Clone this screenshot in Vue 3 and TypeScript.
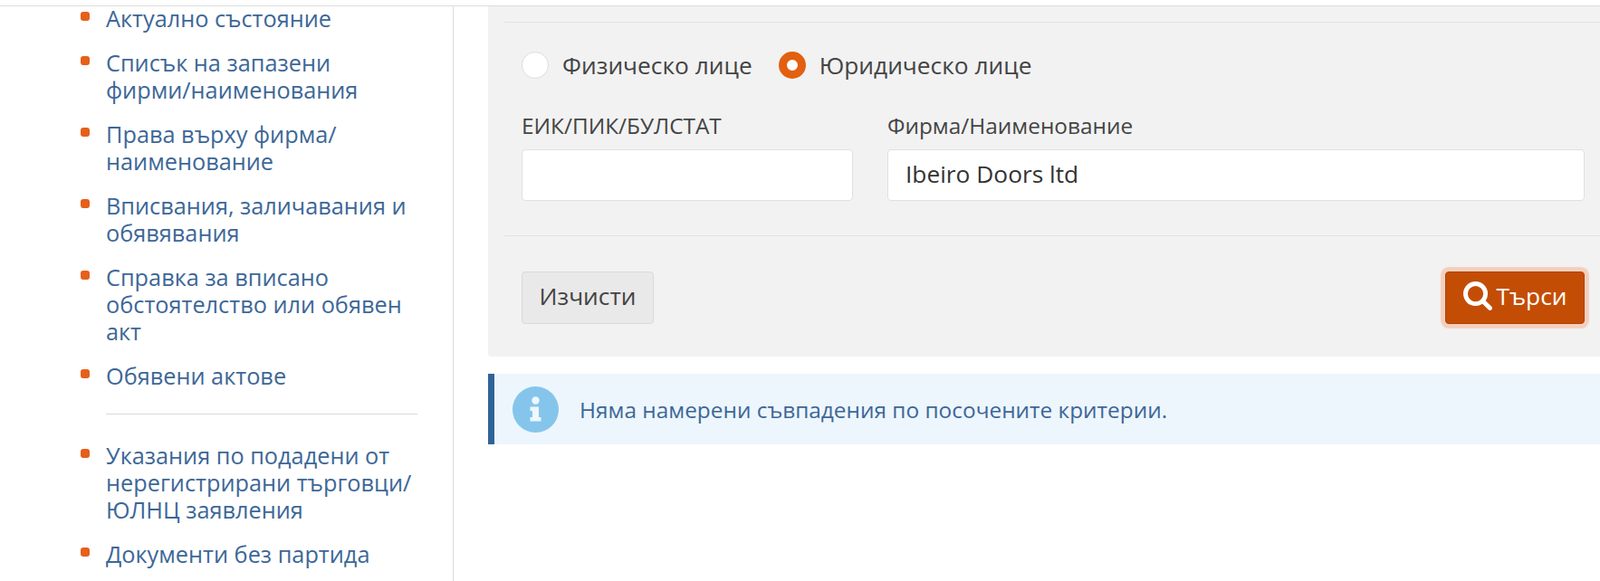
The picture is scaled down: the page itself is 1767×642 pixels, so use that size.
<template>
  <div class="page">
    <aside class="sidebar">
      <ul class="menu">
        <template v-for="(item, idx) in menuTop" :key="idx">
          <li class="menu-item">
            <span class="bullet"></span>
            <a class="menu-link">{{ item }}</a>
          </li>
        </template>
        <li class="menu-sep"></li>
        <template v-for="(item, idx) in menuBottom" :key="idx">
          <li class="menu-item">
            <span class="bullet"></span>
            <a class="menu-link">{{ item }}</a>
          </li>
        </template>
      </ul>
    </aside>

    <main class="content">
      <section class="panel">
        <hr class="panel-line first" />
        <div class="radios">
          <label class="radio">
            <input v-model="personType" type="radio" value="person" />
            <span>Физическо лице</span>
          </label>
          <label class="radio">
            <input v-model="personType" type="radio" value="company" />
            <span>Юридическо лице</span>
          </label>
        </div>
        <div class="fields">
          <div class="field">
            <label>ЕИК/ПИК/БУЛСТАТ</label>
            <input v-model="eik" type="text" />
          </div>
          <div class="field">
            <label>Фирма/Наименование</label>
            <input v-model="company" type="text" />
          </div>
        </div>
        <hr class="panel-line" />
        <div class="actions">
          <button class="btn btn-clear" type="button">Изчисти</button>
          <button class="btn btn-search" type="button">
            <svg class="search-icon" viewBox="64 128 1664 1664" aria-hidden="true">
              <path
                fill="currentColor"
                d="M1216 832q0-185-131.500-316.500t-316.500-131.500-316.500 131.500-131.500 316.500 131.500 316.500 316.500 131.500 316.500-131.500 131.500-316.500zm512 832q0 52-38 90t-90 38q-54 0-90-38l-343-342q-179 124-399 124-143 0-273.500-55.500t-225-150-150-225-55.500-273.500 55.500-273.500 150-225 225-150 273.500-55.500 273.500 55.500 225 150 150 225 55.500 273.500q0 220-124 399l343 343q37 37 37 90z"
              />
            </svg>
            <span>Търси</span>
          </button>
        </div>
      </section>

      <div class="alert">
        <svg class="info-icon" viewBox="0 0 51 51" aria-hidden="true">
          <circle cx="25.500" cy="25.500" r="25.500" fill="#85c5ec" />
          <circle cx="25.500" cy="15.500" r="4.200" fill="#eef7fd" />
          <path
            fill="#eef7fd"
            d="M19.500 22.500h9.500v11.500h2.500v4.500h-12v-4.500h2.500v-7h-2.500z"
          />
        </svg>
        <span class="alert-text">Няма намерени съвпадения по посочените критерии.</span>
      </div>
    </main>
  </div>
</template>

<script setup lang="ts">
import { ref } from "vue";

const personType = ref("company");
const eik = ref("");
const company = ref("Ibeiro Doors ltd");

const menuTop: string[] = [
  "Актуално състояние",
  "Списък на запазени фирми/наименования",
  "Права върху фирма/ наименование",
  "Вписвания, заличавания и обявявания",
  "Справка за вписано обстоятелство или обявен акт",
  "Обявени актове",
];

const menuBottom: string[] = [
  "Указания по подадени от нерегистрирани търговци/ ЮЛНЦ заявления",
  "Документи без партида",
];
</script>

<style>
html,
body {
  margin: 0;
  overflow: hidden;
  background: #fff;
}
</style>

<style scoped>
.page {
  display: flex;
  width: 1767px;
  height: 636px;
  box-sizing: border-box;
  border-top: 1px solid #dcdcdc;
  margin-top: 6px;
  font-family: "Open Sans", "Noto Sans", sans-serif;
  font-size: 26.3px;
  line-height: 30px;
  color: #444;
}
.sidebar {
  flex: none;
  width: 501px;
  box-sizing: border-box;
  border-right: 1px solid #dcdcdc;
  padding-right: 39px;
}
.menu {
  list-style: none;
  margin: -2px 0 0;
  padding: 0 0 0 89px;
  font-size: 25.3px;
}
.menu-item {
  display: flex;
  gap: 19px;
  margin-bottom: 19px;
}
.bullet {
  flex: none;
  width: 10px;
  height: 10px;
  margin-top: 8px;
  margin-right: -1px;
  border-radius: 3px;
  background: #e5601a;
}
.menu-link {
  color: #3d6797;
}
.menu-sep {
  height: 1px;
  margin: 27px 0 30px 28px;
  background: #d9d9d9;
}
.content {
  flex: 1;
  min-width: 0;
  padding-left: 38px;
}
.panel {
  box-sizing: border-box;
  height: 387px;
  padding: 0 17px 0 37px;
  background: #f2f2f2;
  border-bottom-left-radius: 3px;
}
.panel-line {
  height: 1px;
  border: 0;
  margin: 0 -17px 39px -19px;
  background: #e2e2e2;
}
.panel-line.first {
  margin-bottom: 33px;
  position: relative;
  top: 17px;
}
.radios {
  display: flex;
  gap: 29px;
  padding-top: 16px;
  height: 30px;
  box-sizing: content-box;
}
.radio {
  display: flex;
  align-items: center;
  gap: 15px;
  height: 30px;
}
.radio input {
  appearance: none;
  box-sizing: border-box;
  width: 30px;
  height: 30px;
  margin: 0;
  border: 1px solid #ddd;
  border-radius: 50%;
  background: #fff;
}
.radio input:checked {
  border: 9px solid #e2600f;
}
.fields {
  display: grid;
  grid-template-columns: 366px 1fr;
  column-gap: 38px;
  margin-top: 37px;
  margin-bottom: 38px;
}
.field label {
  display: block;
  margin-bottom: 11px;
  font-size: 24.4px;
}
.field input {
  display: block;
  box-sizing: border-box;
  width: 100%;
  height: 57px;
  padding: 0 19px 4px;
  border: 1px solid #e0e0e0;
  border-radius: 4px;
  background: #fff;
  font: inherit;
  color: #333;
}
.actions {
  display: flex;
  justify-content: space-between;
}
.btn {
  display: flex;
  align-items: center;
  box-sizing: border-box;
  height: 58px;
  padding: 0 0 4px;
  font: inherit;
  border-radius: 4px;
}
.btn-clear {
  width: 146px;
  justify-content: center;
  border: 1px solid #d9d9d9;
  background: #e9e9e9;
  color: #444;
}
.btn-search {
  width: 154px;
  justify-content: center;
  gap: 5px;
  border: 1px solid #a94204;
  background: #c44d06;
  color: #fff;
  box-shadow: 0 0 1px 5px #f4cfbd;
}
.search-icon {
  width: 32px;
  height: 32px;
}
.alert {
  display: flex;
  align-items: center;
  height: 78px;
  margin-top: 19px;
  padding-left: 20px;
  border-left: 7px solid #2f6499;
  background: #edf6fd;
}
.info-icon {
  flex: none;
  width: 51px;
  height: 51px;
  margin-right: 23px;
}
.alert-text {
  padding-top: 2px;
  font-size: 24.4px;
  color: #3d6797;
}
</style>
